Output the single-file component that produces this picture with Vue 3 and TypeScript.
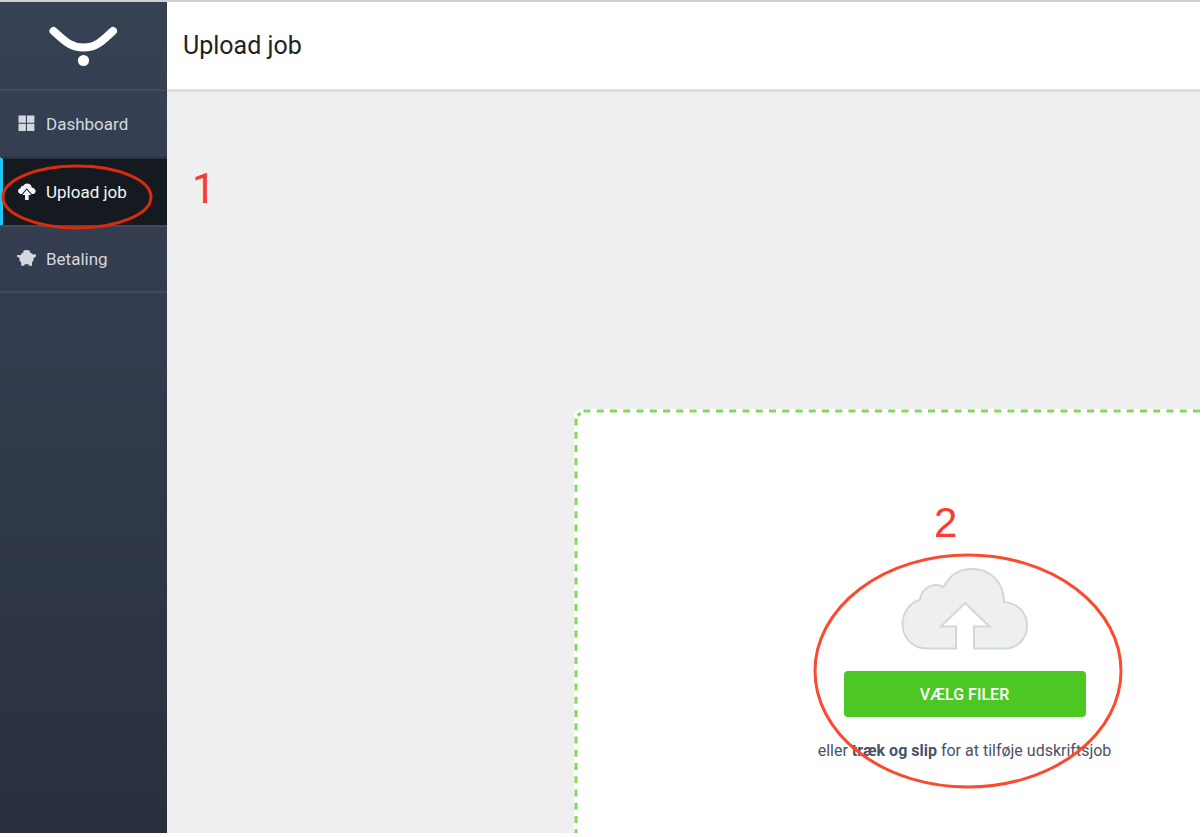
<script setup lang="ts">
import { ref } from 'vue'

type IconName = 'grid' | 'cloud' | 'piggy'

interface NavItem {
  label: string
  icon: IconName
}

const items: NavItem[] = [
  { label: 'Dashboard', icon: 'grid' },
  { label: 'Upload job', icon: 'cloud' },
  { label: 'Betaling', icon: 'piggy' },
]

const active = ref<string>('Upload job')
</script>

<template>
  <div class="page">
    <div class="app">
      <aside class="sidebar">
        <a class="logo" href="#" aria-label="Home">
          <svg width="72" height="44" viewBox="0 0 72 44" aria-hidden="true">
            <path d="M5.500 7C16 16 22 23.500 35.500 23.500S55 16 65 7" fill="none" stroke="#fff" stroke-width="8" stroke-linecap="round" />
            <circle cx="35.500" cy="36.500" r="5.600" fill="#fff" />
          </svg>
        </a>
        <nav>
          <a
            v-for="item in items"
            :key="item.label"
            href="#"
            class="nav-item"
            :class="{ active: item.label === active }"
            @click.prevent="active = item.label"
          >
            <svg v-if="item.icon === 'grid'" class="icon" viewBox="0 0 20 20" aria-hidden="true">
              <path d="M2.500 1.500h7.400v7.200H2.500zM11 1.500h7.400v7.200H11zM2.500 9.700h7.400v7.200H2.500zM11 9.700h7.400v7.200H11z" />
            </svg>
            <svg v-else-if="item.icon === 'cloud'" class="icon" viewBox="0 0 20 20" aria-hidden="true">
              <path d="M4.500 12C1.500 11.500 1 7 4.500 6.200C5 4 6.500 3.500 7.500 3.800C9.300 .2 15 .8 15.800 5.500C20 6.500 21 10.500 17.500 12H15.800L10.800 6.200L5.800 12Z" />
              <path d="M10.800 7.800L15.300 13H12.700V18H9V13H6.300Z" />
            </svg>
            <svg v-else class="icon" viewBox="0 0 20 20" aria-hidden="true">
              <path d="M1 6L4.500 6.300C5.300 4.700 6.300 3.700 7.500 3.300L7.300 1.800C9 .8 12.200 .8 14 1.800L13.700 3.200C14.700 3.600 15.700 4.300 16.200 5.200L20 5.500V7.500L17.700 9C17.700 11 17 12.300 16 13.500V16.800H12.700V15.200H8.500V16.800H5.200V13.500L3.500 11.500V9L1 7.500Z" />
            </svg>
            <span>{{ item.label }}</span>
          </a>
        </nav>
      </aside>

      <div class="content">
        <header class="topbar">
          <h1>Upload job</h1>
        </header>
        <main class="main">
          <section class="dropzone">
            <svg class="outline" aria-hidden="true">
              <path d="M9.500 2H4000" />
              <path d="M2 9.500V4000" />
              <path class="corner" d="M3.500 6.500L6.500 4" />
            </svg>
            <svg class="cloud" width="128" height="84" viewBox="0 0 128 84" aria-hidden="true">
              <path
                d="M55 80.500H26C11 80.500 1.500 69 1.500 56C1.500 44 9 35 19 31.500C21 19 33 14 42.500 19C50 5 61 1 71 1C89 1 103 14 103 34C117 35 126 45 126 58C126 70 117 80.500 104 80.500H73V58.500H88.500L64 35L40 58.500H55Z"
                fill="#edeff1" stroke="#d3d7d8" stroke-width="2"
              />
            </svg>
            <button type="button" class="pick">VÆLG FILER</button>
            <p class="hint">eller <strong>træk og slip</strong> for at tilføje udskriftsjob</p>
          </section>
        </main>
      </div>

      <svg class="mark mark-one" viewBox="0 0 152 66" aria-hidden="true">
        <ellipse cx="76" cy="33" rx="74" ry="31" />
      </svg>
      <span class="step step-one">1</span>
      <svg class="mark mark-two" viewBox="0 0 310 236" aria-hidden="true">
        <ellipse cx="155" cy="118" rx="153" ry="116" />
      </svg>
      <span class="step step-two">2</span>
    </div>
  </div>
</template>

<style>
body {
  margin: 0;
  background: #fff;
}
</style>

<style scoped>
.page {
  box-sizing: border-box;
  min-height: 100vh;
  padding: 0 3px 4px 0;
  display: flex;
  font-family: Roboto, "Liberation Sans", sans-serif;
}

.app {
  position: relative;
  flex: 1;
  min-width: 0;
  display: flex;
  border-top: 2px solid #d0d0d0;
  overflow: hidden;
}

.sidebar {
  width: 167px;
  flex: none;
  background: linear-gradient(#364153, #323c4e 40%, #29303d);
}

.logo {
  display: flex;
  justify-content: center;
  height: 87px;
  box-sizing: border-box;
  padding-top: 22px;
}

.nav-item {
  display: flex;
  align-items: center;
  gap: 10px;
  box-sizing: border-box;
  height: 68px;
  padding-left: 16px;
  border-top: 2px solid #414b5d;
  color: #d5d8de;
  font-size: 17px;
  text-decoration: none;
}

.nav-item:last-child {
  border-bottom: 2px solid #414b5d;
}

.nav-item.active {
  padding-left: 13px;
  border-left: 3px solid #20c5f5;
  border-top-color: #2a3341;
  background: #151a21;
  color: #f4f5f6;
}

.icon {
  width: 20px;
  height: 20px;
  fill: currentColor;
}

.content {
  flex: 1;
  min-width: 0;
  display: flex;
  flex-direction: column;
}

.topbar {
  display: flex;
  align-items: center;
  height: 87px;
  padding-left: 16px;
  border-bottom: 3px solid #dedede;
  background: #fff;
}

h1 {
  margin: 0;
  font-size: 25px;
  font-weight: 400;
  color: #222;
}

.main {
  flex: 1;
  display: flex;
  padding: 317px 0 0 407px;
  background: #efefef;
  overflow: hidden;
}

.dropzone {
  position: relative;
  flex: none;
  box-sizing: border-box;
  width: 781px;
  padding-top: 159px;
  display: flex;
  flex-direction: column;
  align-items: center;
  border-radius: 8px 0 0 0;
  background: #fff;
}

.outline {
  position: absolute;
  inset: 0;
  width: 100%;
  height: 100%;
  fill: none;
  stroke: #7fda5c;
  stroke-width: 3;
  stroke-dasharray: 7 6.25;
}

.outline .corner {
  stroke-dasharray: none;
}

.pick {
  width: 242px;
  height: 46px;
  margin-top: 19px;
  border: 0;
  border-radius: 4px;
  background: #4dc723;
  color: #fff;
  font: 500 16px Roboto, "Liberation Sans", sans-serif;
}

.hint {
  margin: 24px 0 0;
  font-size: 16px;
  line-height: 20px;
  color: #4b5166;
  white-space: nowrap;
}

.hint strong {
  font-weight: 700;
}

.mark {
  position: absolute;
  fill: none;
  stroke: #fb4a2f;
  stroke-width: 3;
}

.mark-one {
  left: 1px;
  top: 162px;
  width: 152px;
  height: 66px;
  stroke: #dc2b0c;
}

.mark-two {
  left: 813px;
  top: 551px;
  width: 310px;
  height: 236px;
}

.step {
  position: absolute;
  font-size: 42px;
  line-height: 48px;
  color: #fb3b33;
}

.step-one {
  left: 192px;
  top: 163px;
  font-family: Roboto, sans-serif;
}

.step-two {
  left: 934px;
  top: 497px;
  font-family: "Liberation Sans", Arial, sans-serif;
}
</style>
